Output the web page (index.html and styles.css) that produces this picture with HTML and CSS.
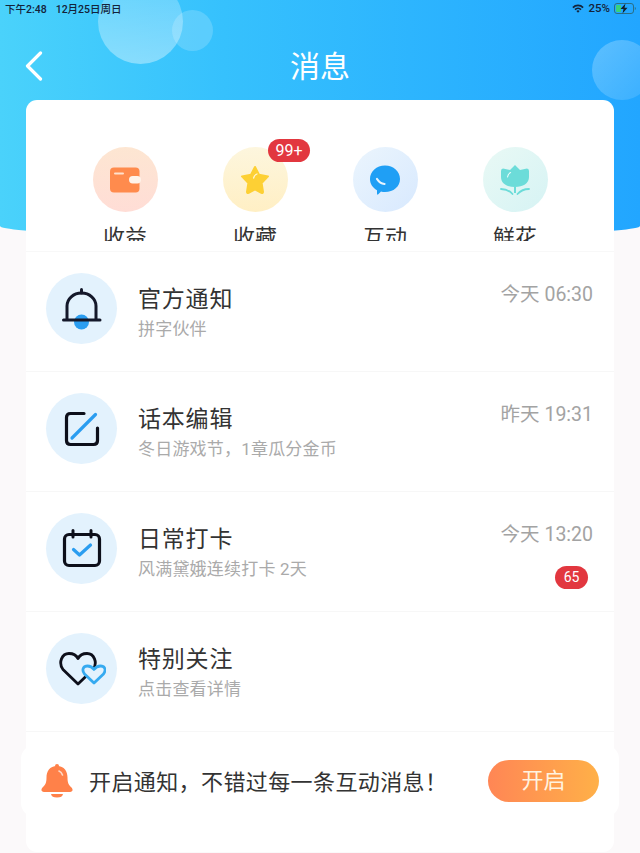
FILE: index.html
```html
<!DOCTYPE html>
<html lang="zh-CN">
<head>
  <meta charset="UTF-8">
  <title>消息</title>
  <link rel="stylesheet" href="styles.css">
</head>
<body>
  <div class="page">
    <div class="hero">
      <span class="bubble bubble-big"></span>
      <span class="bubble bubble-small"></span>
      <span class="bubble bubble-right"></span>

      <div class="status">
        <span class="status-time">下午2:48</span>
        <span class="status-date">12月25日周日</span>
        <span class="status-right">
          <svg class="wifi" width="12" height="9" viewBox="0 0 12 9">
            <path d="M0.3 3 A8 8 0 0 1 11.7 3 L10.5 4.2 A6.3 6.3 0 0 0 1.5 4.2 Z" fill="#14233a"/>
            <path d="M2.4 5 A5 5 0 0 1 9.6 5 L8.4 6.2 A3.3 3.3 0 0 0 3.6 6.2 Z" fill="#14233a"/>
            <path d="M4.4 7 A2.3 2.3 0 0 1 7.6 7 L6 8.8 Z" fill="#14233a"/>
          </svg>
          <span>25%</span>
          <svg class="battery" width="22" height="11" viewBox="0 0 22 11">
            <rect x="0.5" y="0.5" width="19" height="10" rx="2.5" fill="none" stroke="#2a6f86"/>
            <rect x="2" y="2" width="5" height="7" rx="1" fill="#39d27a"/>
            <path d="M20.8 3.8 a2 2 0 0 1 0 3.4 Z" fill="#2a6f86"/>
            <path d="M11.5 0.5 L6.5 6 H9.5 L8.5 10.5 L13.5 4.8 H10.5 Z" fill="#10202c"/>
          </svg>
        </span>
      </div>

      <div class="nav">
        <svg class="back" width="18" height="30" viewBox="0 0 18 30">
          <path d="M15.5 2 L2.5 15 L15.5 28" fill="none" stroke="#fff" stroke-width="3.2" stroke-linecap="round" stroke-linejoin="round"/>
        </svg>
        <h1 class="nav-title">消息</h1>
      </div>
    </div>

    <div class="card">
      <div class="tabs">
        <div class="tab">
          <div class="tab-icon tab-income">
            <svg width="32" height="26" viewBox="0 0 32 26">
              <rect x="1" y="0.5" width="29.5" height="25" rx="4" fill="#ff8b4d"/>
              <rect x="20" y="9" width="12" height="7.5" rx="3.7" fill="#fff3ea"/>
              <rect x="5" y="5.5" width="10" height="2" rx="1" fill="#ffe1cd"/>
            </svg>
          </div>
          <div class="tab-label">收益</div>
        </div>
        <div class="tab">
          <div class="tab-icon tab-star">
            <svg width="32" height="32" viewBox="0 0 32 32">
              <path d="M16 3 L20 10.8 L29 12.4 L22.6 19 L24 27.8 Q24 29.4 22.4 28.8 L16 25.4 L9.6 28.8 Q8 29.4 8 27.8 L9.4 19 L3 12.4 L12 10.8 Z" fill="#fdd034" stroke="#fdd034" stroke-width="2" stroke-linejoin="round"/>
              <path d="M14.6 14 Q15.2 11 18 10" fill="none" stroke="#fff6d6" stroke-width="1.3" stroke-linecap="round"/>
            </svg>
          </div>
          <span class="tab-badge">99+</span>
          <div class="tab-label">收藏</div>
        </div>
        <div class="tab">
          <div class="tab-icon tab-chat">
            <svg width="32" height="32" viewBox="0 0 32 32">
              <path d="M16 1.5 C24.5 1.5 31 7.4 31 15 C31 22.6 24.5 28 16 28 C14.6 28 13.2 27.9 12 27.5 L9 30.5 Q8 31 8 29.6 L8 26.2 C3.6 23.8 1 19.8 1 15 C1 7.4 7.5 1.5 16 1.5 Z" fill="#1f9ff5"/>
              <path d="M8 15 Q11 19.6 15.5 20" fill="none" stroke="#e8f5ff" stroke-width="2.2" stroke-linecap="round"/>
            </svg>
          </div>
          <div class="tab-label">互动</div>
        </div>
        <div class="tab">
          <div class="tab-icon tab-flower">
            <svg width="30" height="32" viewBox="0 0 30 32">
              <path d="M15 1 L20 6 L27 4.5 Q29 4.5 29 7 L29 13 C29 19.5 23 23 15 23 C7 23 1 19.5 1 13 L1 7 Q1 4.5 3 4.5 L10 6 Z" fill="#6cdcd9"/>
              <path d="M7.5 13 Q8 10 10.5 8.6" fill="none" stroke="#e6fbfa" stroke-width="1.2" stroke-linecap="round"/>
              <path d="M15 23 L15 29" fill="none" stroke="#6cdcd9" stroke-width="2"/>
              <path d="M1 25 Q8 25 12.5 30 M29 25 Q22 25 17.5 30" fill="none" stroke="#6cdcd9" stroke-width="1.8" stroke-linecap="round"/>
            </svg>
          </div>
          <div class="tab-label">鲜花</div>
        </div>
      </div>

      <div class="row">
        <div class="row-icon">
          <svg width="40" height="44" viewBox="0 -2 40 44">
            <circle cx="19.5" cy="33" r="7.5" fill="#2a9df0"/>
            <path d="M5 30 V17 A14.5 13 0 0 1 34 17 V30" fill="none" stroke="#14182a" stroke-width="3"/>
            <path d="M19.5 0.5 V4" stroke="#14182a" stroke-width="3" stroke-linecap="round"/>
            <path d="M1.5 31 H38" stroke="#14182a" stroke-width="3" stroke-linecap="round"/>
          </svg>
        </div>
        <div class="row-body">
          <div class="row-title">官方通知</div>
          <div class="row-sub">拼字伙伴</div>
        </div>
        <div class="row-meta">
          <div class="row-time">今天 06:30</div>
        </div>
      </div>

      <div class="row">
        <div class="row-icon">
          <svg width="40" height="40" viewBox="0 0 40 40">
            <path d="M22 4.5 H8.5 Q4.5 4.5 4.5 8.5 V31.5 Q4.5 35.5 8.5 35.5 H31.5 Q35.5 35.5 35.5 31.5 V19" fill="none" stroke="#0d0f1a" stroke-width="3.2" stroke-linecap="round"/>
            <path d="M10 29 L33.5 5.5" stroke="#2a9df0" stroke-width="3.2" stroke-linecap="round"/>
          </svg>
        </div>
        <div class="row-body">
          <div class="row-title">话本编辑</div>
          <div class="row-sub">冬日游戏节，1章瓜分金币</div>
        </div>
        <div class="row-meta">
          <div class="row-time">昨天 19:31</div>
        </div>
      </div>

      <div class="row">
        <div class="row-icon">
          <svg width="40" height="40" viewBox="0 0 40 40">
            <rect x="2.5" y="5.5" width="35" height="31" rx="4.5" fill="none" stroke="#0d0f1a" stroke-width="3.2"/>
            <path d="M11 1.5 V8 M29 1.5 V8" stroke="#0d0f1a" stroke-width="3" stroke-linecap="round"/>
            <path d="M11.5 20.5 L17.5 26 L28.5 16" fill="none" stroke="#2a9df0" stroke-width="3.2" stroke-linecap="round" stroke-linejoin="round"/>
          </svg>
        </div>
        <div class="row-body">
          <div class="row-title">日常打卡</div>
          <div class="row-sub">风满黛娥连续打卡 2天</div>
        </div>
        <div class="row-meta">
          <div class="row-time">今天 13:20</div>
          <span class="row-badge">65</span>
        </div>
      </div>

      <div class="row">
        <div class="row-icon">
          <svg width="48" height="40" viewBox="0 0 48 40">
            <path d="M20 35 L5 20.5 C0 13.5 4 4.5 11 4.5 C15 4.5 18.5 6.5 20 9.5 C21.5 6.5 25 4.5 29 4.5 C36 4.5 40 13.5 35 20.5 Z" fill="none" stroke="#0d0f1a" stroke-width="2.8" stroke-linejoin="round"/>
            <path d="M36 34 L26.5 25 C23 20 26 17 29.5 17 C32.5 17 34.5 18.5 36 20.5 C37.5 18.5 39.5 17 42.5 17 C46 17 49 20 45.5 25 Z" fill="#e3f2fd" stroke="#35aaf0" stroke-width="2.8" stroke-linejoin="round"/>
          </svg>
        </div>
        <div class="row-body">
          <div class="row-title">特别关注</div>
          <div class="row-sub">点击查看详情</div>
        </div>
      </div>
    </div>

    <div class="banner">
      <svg class="banner-bell" width="32" height="34" viewBox="0 0 32 34">
        <circle cx="16" cy="2" r="2" fill="#ff8149"/>
        <path d="M16 2 C23.5 2 26.5 7.5 26.5 13.5 C26.5 18.5 27.5 21 30.5 23.5 C32.5 25.5 31.5 28 29 28 H3 C0.5 28 -0.5 25.5 1.5 23.5 C4.5 21 5.5 18.5 5.5 13.5 C5.5 7.5 8.5 2 16 2 Z" fill="#ff8149"/>
        <path d="M18 7 Q20.5 8 21.5 11" fill="none" stroke="#ffd9c6" stroke-width="1.6" stroke-linecap="round"/>
        <path d="M10 30 H22 Q21.5 33.5 16 33.5 Q10.5 33.5 10 30 Z" fill="#ff8149"/>
      </svg>
      <span class="banner-text">开启通知，不错过每一条互动消息！</span>
      <span class="banner-btn">开启</span>
    </div>
  </div>
</body>
</html>
```

FILE: styles.css
```css
* {
  box-sizing: border-box;
}

body {
  margin: 0;
  font-family: Roboto, "Noto Sans CJK SC", sans-serif;
  background: #fbf9fa;
}

.page {
  position: relative;
  width: 640px;
  height: 853px;
  overflow: hidden;
}

/* blue header */
.hero {
  position: relative;
  height: 238px;
  overflow: hidden;
  background: linear-gradient(90deg, #4ad2fb 0%, #36c1fd 35%, #22a6ff 100%);
  border-radius: 0 0 50% 50% / 0 0 12px 12px;
}

.bubble {
  position: absolute;
  border-radius: 50%;
}

.bubble-big {
  left: 98px;
  top: -21px;
  width: 85px;
  height: 85px;
  background: linear-gradient(180deg, rgba(255,255,255,0.2), rgba(255,255,255,0.38));
}

.bubble-small {
  left: 172px;
  top: 10px;
  width: 41px;
  height: 41px;
  background: rgba(255,255,255,0.18);
}

.bubble-right {
  left: 592px;
  top: 40px;
  width: 60px;
  height: 60px;
  background: linear-gradient(135deg, rgba(255,255,255,0.26), rgba(255,255,255,0.1));
}

.status {
  position: relative;
  display: flex;
  align-items: center;
  height: 16px;
  padding: 0 4px 0 5px;
  font-size: 10.5px;
  font-weight: 500;
  color: #14233a;
}

.status-date {
  margin-left: 9px;
}

.status-right {
  margin-left: auto;
  display: flex;
  align-items: center;
  gap: 4px;
  font-size: 11.5px;
}

.nav {
  position: relative;
  height: 68px;
  margin-top: 14px;
  display: flex;
  align-items: center;
  justify-content: center;
}

.back {
  position: absolute;
  left: 25px;
  top: 21px;
}

.nav-title {
  margin: 0;
  font-size: 30px;
  font-weight: 400;
  color: #fff;
}

/* white panel */
.card {
  position: relative;
  width: 588px;
  height: 752px;
  margin: -138px 0 0 26px;
  background: #fff;
  border-radius: 11px;
}

.tabs {
  display: grid;
  grid-template-columns: repeat(4, 130px);
  padding: 47px 34px 10px;
  border-bottom: 1px solid #f8f8f8;
}

.tab {
  position: relative;
  display: flex;
  flex-direction: column;
  align-items: center;
}

.tab-icon {
  width: 65px;
  height: 65px;
  border-radius: 50%;
  display: flex;
  align-items: center;
  justify-content: center;
}

.tab-income {
  background: linear-gradient(180deg, #fde6d2, #ffddd6);
}

.tab-star {
  background: linear-gradient(180deg, #fdf6de, #ffefc4);
}

.tab-chat {
  background: linear-gradient(135deg, #ebf5fd, #d8e9fe);
}

.tab-flower {
  background: linear-gradient(135deg, #e9f9f5, #d6f3f4);
}

.tab-badge {
  position: absolute;
  top: -8px;
  left: 78px;
  width: 42px;
  height: 23px;
  border-radius: 12px;
  background: #e2373f;
  color: #fff;
  font-size: 16px;
  line-height: 23px;
  text-align: center;
}

/* bottom of the labels is cut off in the app too */
.tab-label {
  height: 15px;
  margin-top: 14px;
  overflow: hidden;
  font-size: 22px;
  line-height: 23px;
  color: #333;
}

.row {
  display: flex;
  height: 120px;
  padding: 21px 21px 0 20px;
  border-bottom: 1px solid #f7f7f7;
}

.row-icon {
  width: 71px;
  height: 71px;
  border-radius: 50%;
  background: #e3f2fd;
  display: flex;
  align-items: center;
  justify-content: center;
}

.row-body {
  flex: 1;
  margin-left: 21px;
}

.row-title {
  font-size: 23px;
  letter-spacing: 0.8px;
  line-height: 30px;
  margin-top: 12px;
  color: #333;
}

.row-sub {
  font-size: 17px;
  letter-spacing: 0.2px;
  line-height: 24px;
  margin-top: 2px;
  color: #aaa;
}

.row-meta {
  display: flex;
  flex-direction: column;
  align-items: flex-end;
}

.row-time {
  font-size: 19.5px;
  line-height: 26px;
  margin-top: 9px;
  color: #a3a3a3;
}

.row-badge {
  width: 33px;
  height: 23px;
  margin: 18px 5px 0 0;
  border-radius: 12px;
  background: #e2373f;
  color: #fff;
  font-size: 14px;
  line-height: 23px;
  text-align: center;
}

/* floating prompt */
.banner {
  position: absolute;
  left: 21px;
  top: 745px;
  width: 598px;
  height: 72px;
  padding: 0 20px 0 20px;
  display: flex;
  align-items: center;
  background: #fff;
  border-radius: 14px;
}

.banner-bell {
  flex: none;
}

.banner-text {
  flex: 1;
  margin-left: 16px;
  margin-top: -2px;
  font-size: 22px;
  letter-spacing: 0.4px;
  color: #333;
}

.banner-btn {
  width: 111px;
  height: 42px;
  border-radius: 21px;
  background: linear-gradient(90deg, #ff8655, #ffb048);
  color: #fff3e0;
  font-size: 22px;
  line-height: 42px;
  text-align: center;
}
```
